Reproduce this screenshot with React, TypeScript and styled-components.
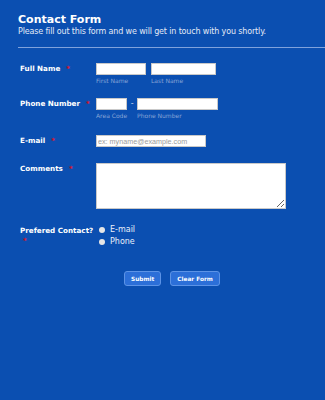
import React from "react";
import styled, { createGlobalStyle } from "styled-components";

const GlobalStyle = createGlobalStyle`
    html, body {
        margin: 0;
        padding: 0;
        background: #0b4fb1;
    }
    body {
        font-family: "DejaVu Sans", Verdana, sans-serif;
        color: #fff;
    }
`

export default function App() {
    return (
        <Page>
            <GlobalStyle/>
            <Header>
                <Title>Contact Form</Title>
                <Subtitle>Please fill out this form and we will get in touch with you shortly.</Subtitle>
            </Header>
            <Form onSubmit={e => e.preventDefault()}>
                <Row $space={13}>
                    <Label>Full Name<Star>*</Star></Label>
                    <Fields>
                        <Field>
                            <Input $w={50}/>
                            <SubLabel>First Name</SubLabel>
                        </Field>
                        <Field>
                            <Input $w={65}/>
                            <SubLabel>Last Name</SubLabel>
                        </Field>
                    </Fields>
                </Row>
                <Row $space={15}>
                    <Label>Phone Number<Star>*</Star></Label>
                    <Fields $gap={0}>
                        <Field>
                            <Input $w={31}/>
                            <SubLabel>Area Code</SubLabel>
                        </Field>
                        <Dash>-</Dash>
                        <Field>
                            <Input $w={81}/>
                            <SubLabel>Phone Number</SubLabel>
                        </Field>
                    </Fields>
                </Row>
                <Row $space={16}>
                    <Label>E-mail<Star>*</Star></Label>
                    <Input $w={110} placeholder="ex: myname@example.com"/>
                </Row>
                <Row $space={16}>
                    <Label>Comments<Star>*</Star></Label>
                    <TextArea/>
                </Row>
                <Row $space={24}>
                    <Label>Prefered Contact?<Star $below>*</Star></Label>
                    <Radios>
                        <RadioLine><Dot/>E-mail</RadioLine>
                        <RadioLine><Dot/>Phone</RadioLine>
                    </Radios>
                </Row>
                <Buttons>
                    <Button type="submit">Submit</Button>
                    <Button type="reset">Clear Form</Button>
                </Buttons>
            </Form>
        </Page>
    );
}

const Page = styled.div`
    width: 325px;
    height: 400px;
    padding: 12px 0 0 18px;
    box-sizing: border-box;
    overflow: hidden;
`
const Header = styled.div`
    padding-bottom: 10px;
    border-bottom: 1px solid #7fa2dc;
`
const Title = styled.h1`
    margin: 0;
    font-size: 11px;
    font-weight: 700;
    line-height: 15px;
`
const Subtitle = styled.p`
    margin: 0;
    font-size: 8px;
    letter-spacing: -0.15px;
    line-height: 10px;
    color: #e2e9f6;
`
const Form = styled.form`
    display: flex;
    flex-direction: column;
    padding: 15px 0 0 2px;
`
const Row = styled.div<{ $space: number }>`
    display: flex;
    align-items: flex-start;
    margin-bottom: ${p => p.$space}px;
`
const Label = styled.label`
    width: 76px;
    flex: none;
    padding-top: 1px;
    font-size: 7.2px;
    font-weight: 700;
    line-height: 10px;
    white-space: nowrap;
`
const Star = styled.span<{ $below?: boolean }>`
    display: ${p => p.$below ? "block" : "inline"};
    margin-left: ${p => p.$below ? "3px" : "6px"};
    color: #e0101e;
    font-size: 7px;
`
const Fields = styled.div<{ $gap?: number }>`
    display: flex;
    gap: ${p => p.$gap ?? 5}px;
`
const Field = styled.div`
    display: flex;
    flex-direction: column;
`
const Input = styled.input<{ $w: number }>`
    width: ${p => p.$w}px;
    height: 12px;
    box-sizing: border-box;
    margin: 0;
    padding: 0 1px;
    border: 1px solid #c9c9c9;
    background: #fff;
    font-family: "Liberation Sans", Arial, sans-serif;
    font-size: 7.2px;
    &::placeholder {
        color: #9a9a9a;
    }
`
const SubLabel = styled.span`
    margin-top: 2px;
    font-size: 6px;
    line-height: 8px;
    color: #86a4d6;
`
const Dash = styled.span`
    width: 10px;
    text-align: center;
    font-size: 8px;
    line-height: 12px;
    color: #c9d6ee;
`
const TextArea = styled.textarea`
    width: 190px;
    height: 46px;
    box-sizing: border-box;
    margin: 0;
    border: 1px solid #c9c9c9;
    background: #fff;
`
const Radios = styled.div`
    display: flex;
    flex-direction: column;
    gap: 2px;
    padding: 0 0 0 3px;
`
const RadioLine = styled.div`
    display: flex;
    align-items: center;
    gap: 5px;
    font-size: 8px;
    line-height: 10px;
    color: #e8eef9;
`
const Dot = styled.span`
    width: 6px;
    height: 6px;
    border-radius: 50%;
    background: #e6e6e6;
`
const Buttons = styled.div`
    display: flex;
    gap: 9px;
    padding-left: 104px;
`
const Button = styled.button`
    height: 15px;
    padding: 0 6px;
    border: 1px solid #5c93e6;
    border-radius: 3px;
    background: #2c6fd8;
    color: #fff;
    font-family: "DejaVu Sans", Verdana, sans-serif;
    font-size: 5.8px;
    font-weight: 700;
    cursor: pointer;
`
